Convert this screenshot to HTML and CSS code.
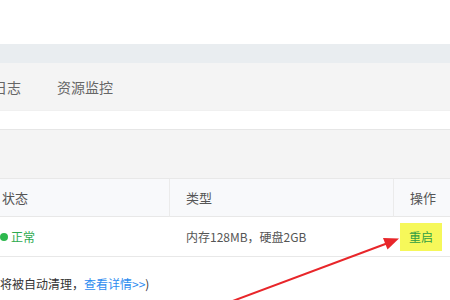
FILE: index.html
```
<!DOCTYPE html>
<html lang="zh">
<head>
<meta charset="utf-8">
<link rel="stylesheet" href="styles.css">
</head>
<body>
<div class="page">
  <div class="top"></div>
  <div class="band"></div>
  <div class="tabs">
    <span class="tab first">日志</span>
    <span class="tab">资源监控</span>
  </div>
  <div class="gap"></div>
  <div class="panel"></div>
  <div class="table">
    <div class="cell head">状态</div>
    <div class="cell head">类型</div>
    <div class="cell head">操作</div>
    <div class="cell body"><span class="status"><span class="dot"></span>正常</span></div>
    <div class="cell body">内存128MB，硬盘2GB</div>
    <div class="cell body"><span class="btn">重启</span></div>
  </div>
  <div class="note">将被自动清理，<a class="link">查看详情&gt;&gt;</a>)</div>
  <svg class="arrow" width="450" height="300" viewBox="0 0 450 300">
    <line x1="230" y1="302" x2="388" y2="243" stroke="#e8262a" stroke-width="2"/>
    <polygon points="399,238.5 387.5,249.5 383,238" fill="#e8262a"/>
  </svg>
</div>
</body>
</html>
```
FILE: styles.css
```
html, body {
  margin: 0;
  padding: 0;
  background: #fff;
  overflow: hidden;
}
.page {
  position: relative;
  width: 450px;
  height: 300px;
  overflow: hidden;
  font-family: "Noto Sans CJK SC", "Noto Sans", sans-serif;
  font-size: 12px;
  color: #555;
}
.top {
  height: 44px;
  background: #fff;
}
.band {
  height: 19px;
  background: #e9edf0;
}
.tabs {
  height: 47px;
  background: #f4f4f4;
  display: flex;
  align-items: center;
  gap: 36px;
  font-size: 14px;
  color: #666;
  border-bottom: 1px solid #f0f0f0;
}
.tab.first {
  margin-left: -7px;
}
.gap {
  height: 18px;
  background: #fff;
  border-bottom: 1px solid #e6e6e6;
}
.panel {
  height: 48px;
  background: #f4f4f4;
}
.table {
  display: grid;
  grid-template-columns: 184px 224px 1fr;
  margin-left: -14px;
  border-top: 1px solid #e8e8e8;
}
.cell {
  display: flex;
  align-items: center;
  padding-left: 16px;
}
.head {
  height: 37px;
  background: #f8f9fb;
  color: #555;
  font-size: 13px;
  border-bottom: 1px solid #e8e8e8;
  border-right: 1px solid #ebebeb;
}
.head:nth-child(3) {
  border-right: none;
}
.body {
  height: 39px;
  background: #fff;
  border-bottom: 1px solid #e8e8e8;
}
.body:nth-child(6) {
  padding-left: 6px;
}
.status {
  display: flex;
  align-items: center;
  gap: 3px;
  color: #2eaa4f;
  margin-left: -2px;
}
.dot {
  width: 8px;
  height: 8px;
  border-radius: 50%;
  background: #2db84d;
}
.btn {
  display: inline-flex;
  align-items: center;
  height: 28px;
  padding: 0 9px;
  background: #f6f85a;
  color: #2f9e44;
}
.note {
  margin-top: 17px;
  height: 20px;
  line-height: 20px;
  color: #333;
}
.link {
  color: #2d8cf0;
}
.arrow {
  position: absolute;
  left: 0;
  top: 0;
}
```
